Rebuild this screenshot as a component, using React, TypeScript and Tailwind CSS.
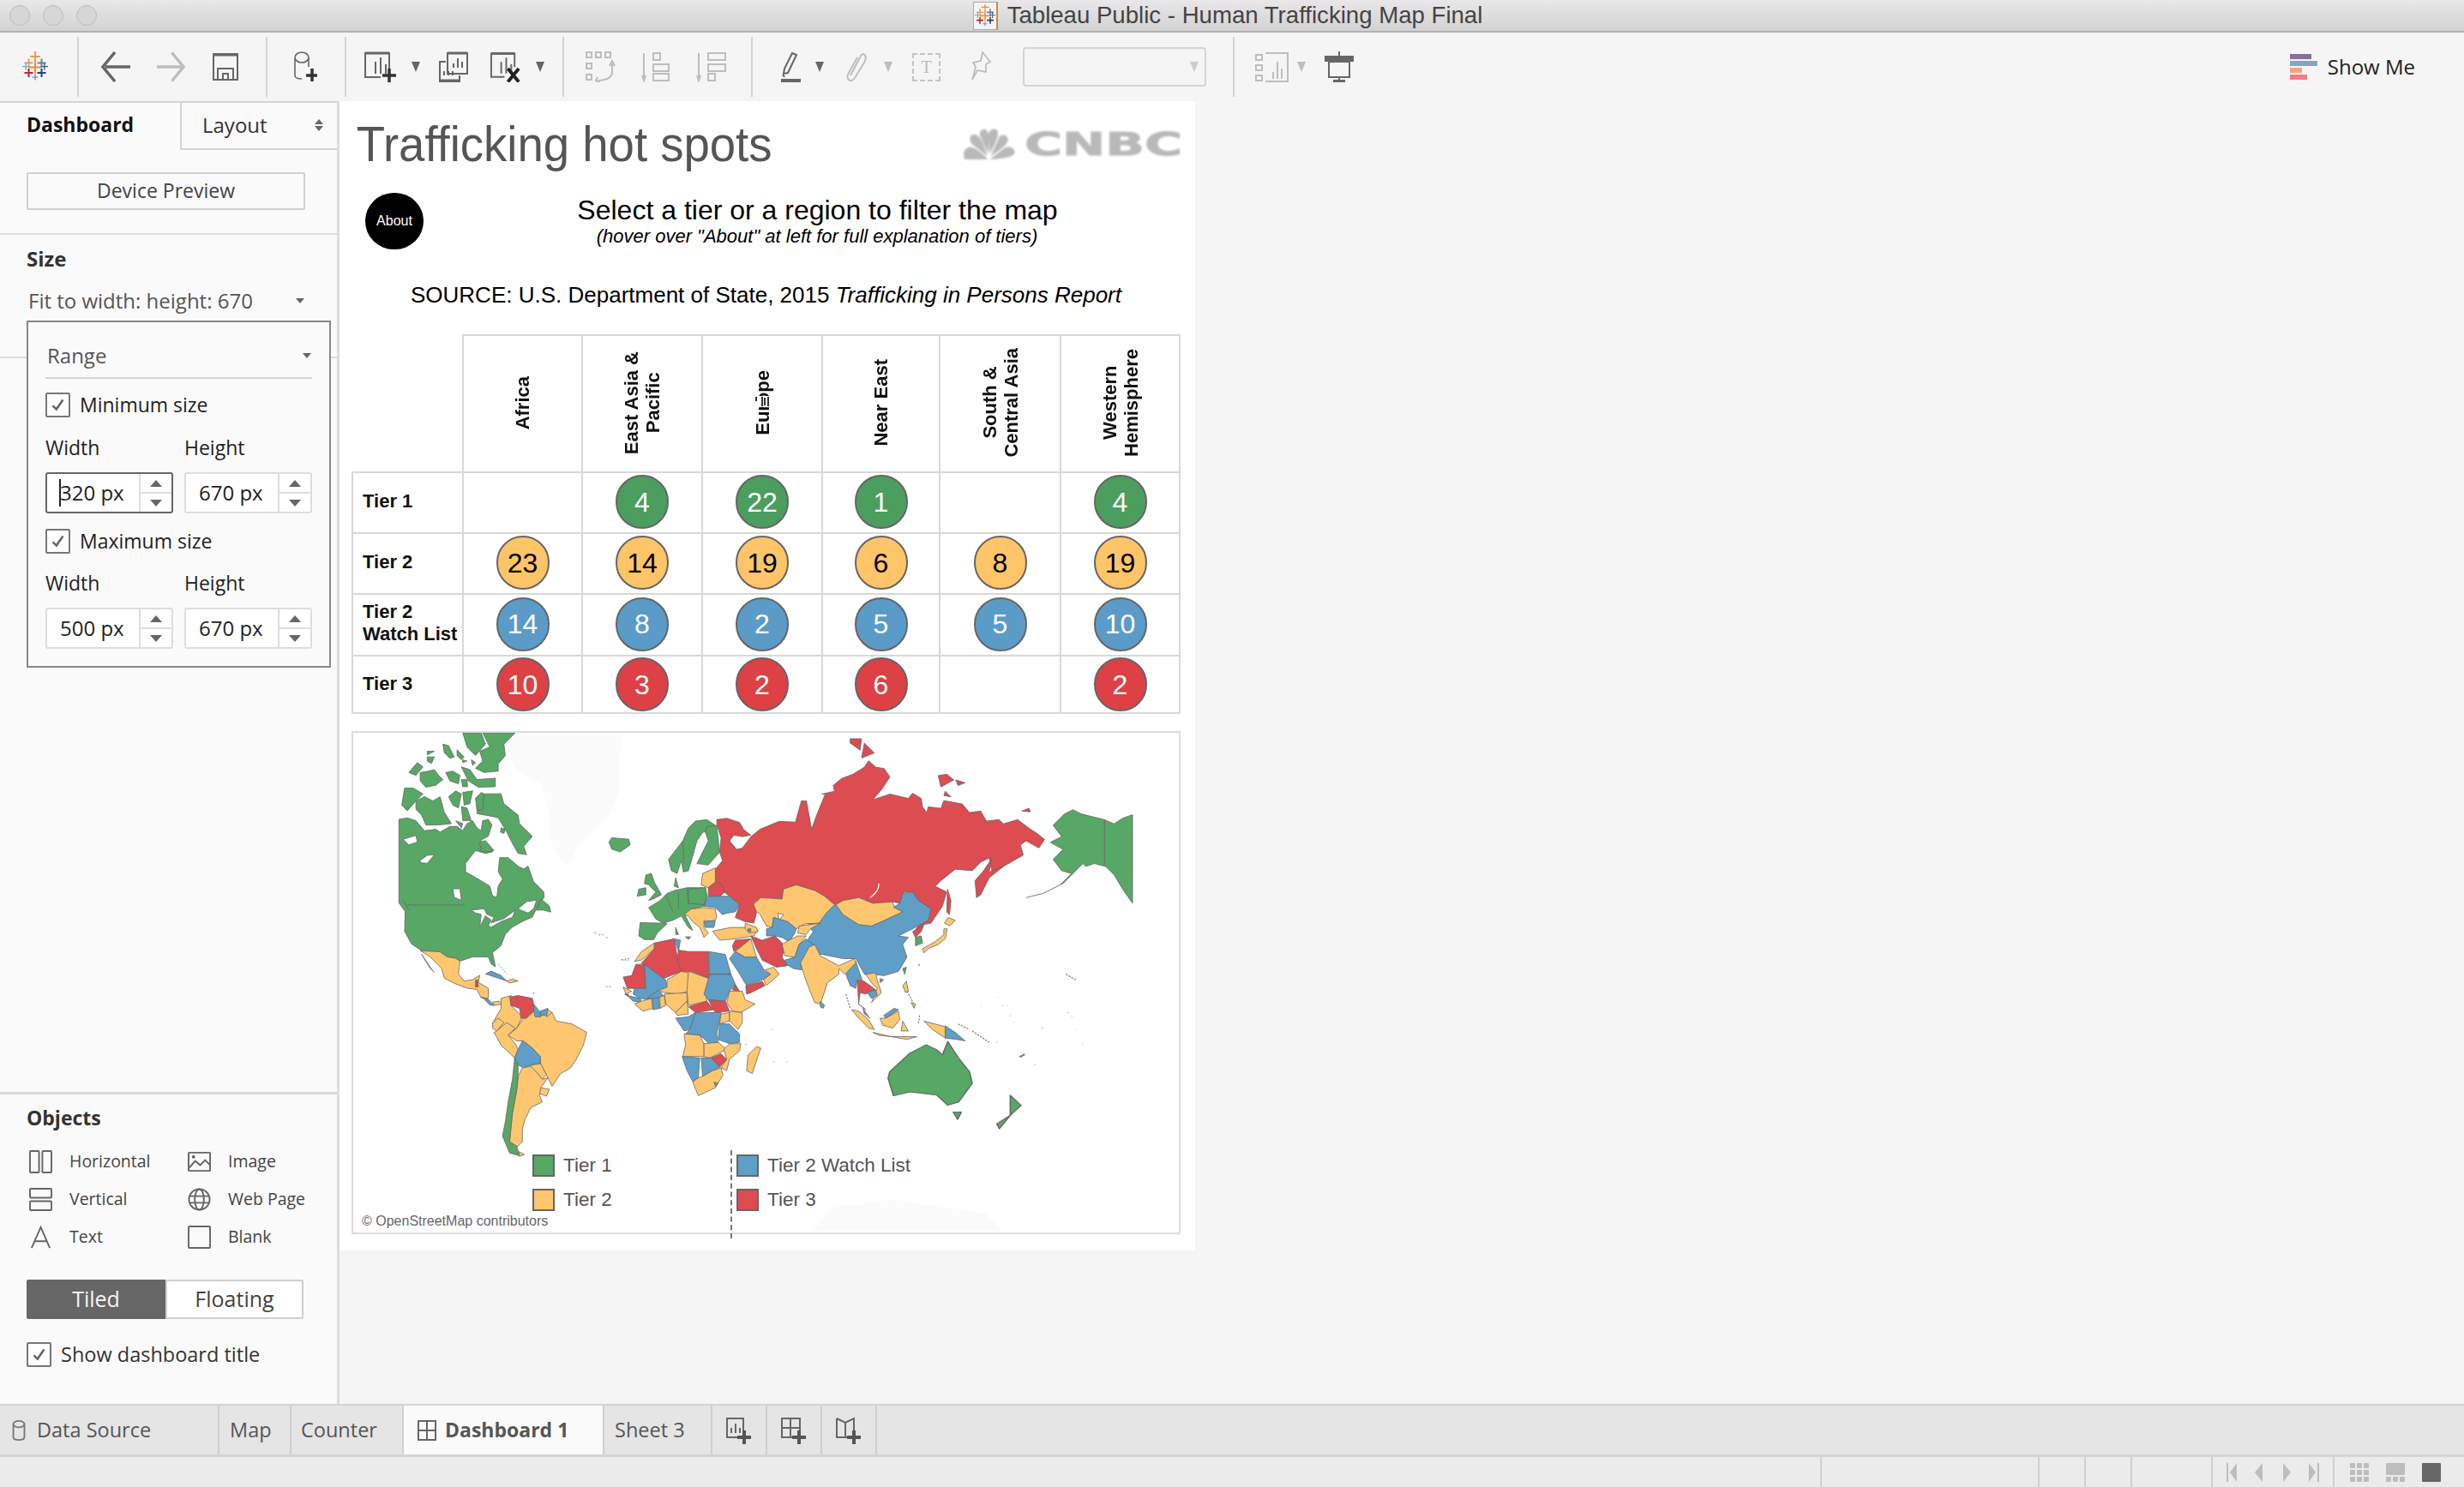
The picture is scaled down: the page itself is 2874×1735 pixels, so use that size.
import React from "react";

const GREEN = "#57a765";
const YELLOW = "#fec76f";
const BLUE = "#5f9ec7";
const RED = "#dc4c50";
const FAINT = "#fbfbfb";

type Shape = [string, string];

// zoomed map crops, so each group has its own offset in the svg
const northAmerica: Shape[] = [
  [FAINT, "465,0 860,0 845,100 850,200 810,290 700,400 670,465 640,450 600,370 600,290 570,180 480,130 460,80"],
  [GREEN, "70,305 100,300 130,310 160,345 200,340 215,350 250,330 275,330 295,345 310,320 330,310 345,335 360,345 365,310 385,305 398,325 385,365 365,375 355,385 365,415 390,410 400,420 375,425 340,415 305,460 305,490 340,510 390,540 400,575 415,580 420,540 435,515 420,490 425,440 455,440 490,470 510,480 525,470 545,525 580,560 582,580 560,610 540,650 505,665 470,685 445,710 430,750 400,775 410,825 395,815 385,790 330,790 285,805 270,795 240,790 215,772 150,768 115,745 90,700 92,630 70,600"],
  ["#ffffff", "325,625 370,620 380,640 405,650 395,670 440,655 480,625 470,650 430,665 395,685 385,680 395,660 375,645 355,685 360,640 340,635"],
  ["#ffffff", "490,620 520,595 555,590 545,620 525,635 500,625"],
  ["#ffffff", "85,375 130,362 135,385 105,395"],
  ["#ffffff", "145,450 170,432 195,430 170,460 145,458"],
  ["#ffffff", "260,550 285,550 290,590 265,580"],
  [GREEN, "555,625 570,585 600,610 605,632 580,625"],
  [GREEN, "350,260 370,215 430,215 440,250 490,290 495,320 540,365 510,400 520,430 490,425 470,390 450,350 420,300 400,295 345,285"],
  [GREEN, "340,230 360,210 370,215 365,270 345,275"],
  [GREEN, "130,240 160,225 190,240 215,225 230,280 255,320 210,325 165,325 150,290 130,270"],
  [GREEN, "90,195 120,195 155,215 130,240 100,275 80,255"],
  [GREEN, "245,225 270,205 290,215 280,265 260,255"],
  [GREEN, "295,210 330,205 320,250 300,255"],
  [GREEN, "290,260 310,265 325,310 295,310"],
  [GREEN, "270,310 295,320 290,335"],
  [GREEN, "355,385 375,380 405,415 385,420 360,420"],
  [GREEN, "430,335 445,340 440,355 428,350"],
  [GREEN, "295,0 360,0 375,40 340,80 310,50"],
  [GREEN, "365,0 480,0 440,40 445,80 420,110 420,135 370,140 340,125 365,100 355,65 390,50"],
  [GREEN, "290,120 320,130 345,165 410,160 410,190 350,192 315,170"],
  [GREEN, "105,140 135,105 155,120 130,150"],
  [GREEN, "145,140 175,135 195,130 210,150 225,165 200,185 165,192 145,170"],
  [GREEN, "235,140 260,135 285,150 280,180 250,170"],
  [GREEN, "290,165 310,165 312,190 295,190"],
  [GREEN, "225,40 245,45 265,85 250,90 230,70"],
  [GREEN, "275,60 300,85 290,95 275,80"],
  [GREEN, "170,65 195,65 170,78"],
  [GREEN, "170,85 195,85 185,108 170,100"],
  [GREEN, "295,95 310,100 295,105"],
  [GREEN, "325,95 340,105 330,115"],
  [GREEN, "810,385 820,370 880,375 885,395 850,420 820,410"],
  [YELLOW, "145,768 215,772 240,790 270,795 285,805 280,850 300,875 330,870 355,855 350,880 385,900 385,935 360,935 345,905 310,900 270,885 230,865 220,830 180,790 165,780"],
  [YELLOW, "150,780 190,840 195,845 180,830 155,790"],
  [BLUE, "375,850 395,840 430,855 450,875 420,865"],
  [YELLOW, "450,875 470,868 490,875 460,882"],
];

const southAmerica: Shape[] = [
  [RED, "40,40 48,40 50,65 40,65"],
  [BLUE, "62,100 85,108 105,130 90,128"],
  [YELLOW, "100,118 125,115 135,125 105,130"],
  [YELLOW, "130,105 165,95 165,130 205,170 185,210 155,230 100,195 110,175 130,140"],
  [YELLOW, "100,190 120,175 140,190 115,220 100,210"],
  [YELLOW, "115,220 150,190 180,210 155,235 180,265 190,285 178,315 130,270 105,225"],
  [YELLOW, "210,175 245,150 270,165 310,155 325,185 380,195 432,225 420,270 395,320 375,350 340,370 310,415 290,375 270,340 268,310 240,280 210,255 185,255 155,235 185,210"],
  [RED, "160,100 190,95 240,105 245,125 245,150 220,175 200,175 195,140 165,130"],
  [BLUE, "245,125 265,150 270,170 250,170 245,150"],
  [BLUE, "268,150 295,140 290,165 270,165"],
  [YELLOW, "295,145 310,155 290,170"],
  [BLUE, "205,255 240,280 268,310 268,335 235,340 210,350 190,340 178,315 190,285"],
  [YELLOW, "235,340 270,335 290,375 275,390 255,365 235,350"],
  [YELLOW, "270,420 300,425 290,450 265,440"],
  [YELLOW, "205,350 235,345 255,365 275,390 295,385 270,420 265,445 275,470 235,490 215,530 205,565 205,610 185,630 160,610 170,510 185,430 190,380"],
  [GREEN, "178,315 190,340 190,380 185,430 170,510 160,610 185,625 195,660 160,650 135,590 145,540 155,470 170,390"],
  [YELLOW, "192,645 212,655 195,662"],
];

const eurafrica: Shape[] = [
  [FAINT, "20,510 60,490 60,540 20,540"],
  [GREEN, "180,125 230,60 250,15 275,-10 315,-15 345,5 350,20 300,30 280,60 265,115 250,165 232,170 225,130 210,175 190,165"],
  [GREEN, "315,10 350,5 360,100 320,145 280,140 300,100 320,60 310,30"],
  [GREEN, "205,190 215,225 200,220"],
  [GREEN, "100,180 120,175 130,205 155,250 125,265 110,270 135,240 110,215 95,210"],
  [GREEN, "75,230 100,225 100,250 70,255"],
  [GREEN, "110,295 150,270 175,245 200,235 245,225 310,225 315,255 305,290 260,300 240,325 265,375 250,365 225,325 195,340 160,350 135,335"],
  [GREEN, "250,230 310,225 315,255 305,285 250,280"],
  [GREEN, "80,348 160,350 175,352 140,385 128,408 95,408 75,395"],
  [GREEN, "205,365 215,390 205,390"],
  [GREEN, "240,398 258,398 250,408"],
  [YELLOW, "235,320 260,300 305,295 345,300 350,330 340,345 305,340 305,365 320,385 305,400 290,365 265,345 250,325"],
  [BLUE, "305,345 345,340 340,365 310,365"],
  [YELLOW, "300,175 345,155 345,205 320,225 295,215"],
  [RED, "320,225 345,205 365,210 378,240 360,258 320,255"],
  [BLUE, "305,290 320,255 395,255 430,285 415,310 385,315 370,320 345,295"],
  [YELLOW, "335,378 400,365 470,365 495,375 480,395 420,405 360,410"],
  [RED, "405,430 415,410 470,405 440,430 410,450"],
  [YELLOW, "440,430 470,405 490,470 450,470 415,450"],
  [RED, "470,395 510,410 555,395 590,430 580,470 600,500 560,505 510,480 490,440"],
  [BLUE, "395,475 415,450 450,470 490,470 520,520 540,530 510,550 455,570 425,520"],
  [YELLOW, "520,515 550,505 570,530 525,570 515,550 540,530"],
  [RED, "452,572 510,555 520,570 470,595 455,600"],
  [YELLOW, "450,350 490,365 495,380 465,385 450,370"],
  [GREEN, "460,370 470,370 470,380 460,380"],
  [YELLOW, "480,285 505,260 580,265 585,230 630,215 695,235 730,255 765,285 735,315 710,350 660,352 630,370 600,345 550,330 545,365 525,360 500,315 490,310"],
  ["#ffffff", "565,315 585,320 570,340"],
  [BLUE, "525,370 545,365 550,330 600,345 630,370 625,385 605,415 580,400 555,395 525,395"],
  [YELLOW, "640,360 715,350 680,370 665,390 635,385"],
  [YELLOW, "580,425 605,410 635,395 665,395 640,425 625,470 590,465"],
  [BLUE, "590,480 625,470 640,425 665,405 690,425 670,465 645,490 650,515 620,510 595,495"],
  [YELLOW, "645,490 675,435 695,425 715,465 780,500 835,475 840,490 800,530 780,510 780,530 740,560 715,635 695,630 675,580 660,540"],
  [BLUE, "715,625 730,640 725,650 715,645"],
  [YELLOW, "60,485 85,450 130,420 130,440 85,480"],
  [RED, "130,420 200,405 210,465 225,520 150,550 85,490 130,440"],
  [BLUE, "200,405 222,410 215,450"],
  [RED, "215,445 250,450 320,450 323,545 260,520 225,520 210,480"],
  [BLUE, "322,450 380,460 400,530 325,530"],
  [RED, "20,540 50,535 65,495 95,495 103,580 35,580"],
  [BLUE, "95,495 170,550 175,575 145,585 110,620 80,615 55,600 60,580 100,580"],
  [YELLOW, "175,550 225,520 250,525 250,590 215,600 170,595 145,590 175,575"],
  [YELLOW, "250,520 323,545 310,590 315,625 250,640 245,590"],
  [BLUE, "325,530 400,530 415,565 395,590 380,625 320,620 305,600"],
  [RED, "405,585 415,565 430,590"],
  [YELLOW, "395,590 440,590 450,620 485,635 435,665 405,660 385,630"],
  [RED, "320,620 380,625 395,660 345,665"],
  [RED, "250,645 315,625 340,655 275,665"],
  [YELLOW, "165,600 245,595 245,625 205,665 170,635"],
  [YELLOW, "205,665 245,625 250,670 210,675"],
  [BLUE, "205,685 250,680 275,665 280,690 255,725 235,730"],
  [BLUE, "275,665 345,665 365,665 350,740 355,775 330,780 290,745 240,740 255,725"],
  [YELLOW, "365,670 395,665 395,695 360,705"],
  [YELLOW, "395,660 440,665 440,700 425,725 395,695"],
  [BLUE, "360,705 395,705 430,740 430,770 395,775 355,760"],
  [YELLOW, "235,740 290,745 305,775 305,820 230,820 240,780"],
  [YELLOW, "305,775 355,770 385,795 355,810 325,825 305,820"],
  [YELLOW, "395,775 435,775 430,800 395,830 385,870 365,860 385,830 375,795"],
  [RED, "330,825 365,810 385,830 360,858"],
  [BLUE, "228,820 290,825 285,895 265,908 245,870"],
  [BLUE, "295,825 330,825 360,858 335,870 300,890"],
  [YELLOW, "300,890 335,870 365,860 372,885 345,930 285,958 265,910 285,895"],
  [BLUE, "340,910 355,915 345,925"],
  [YELLOW, "20,575 50,590 30,600"],
  [BLUE, "35,605 80,615 85,630 55,625"],
  [RED, "25,600 38,600 38,608"],
  [YELLOW, "85,625 120,615 125,650 90,660 60,635"],
  [BLUE, "122,615 145,610 150,650 125,655"],
  [BLUE, "105,615 145,585 165,610 120,615"],
  [YELLOW, "150,610 165,605 170,640 150,650"],
  [YELLOW, "490,785 505,790 475,880 455,870 460,815"],
];

const asia: Shape[] = [
  [RED, "0,195 45,185 40,165 70,140 110,125 150,100 165,78 190,100 220,105 240,135 210,180 180,215 240,195 305,210 320,192 350,210 355,240 370,260 375,240 420,245 430,218 495,230 520,260 560,255 580,290 625,285 640,300 690,285 730,315 760,335 785,355 765,385 720,360 700,375 710,410 640,450 600,470 590,420 560,435 530,465 470,460 420,500 400,520 440,540 425,590 385,650 360,655 325,680 385,600 340,570 320,540 290,540 275,580 250,575 180,580 130,560 75,570 50,585 0,565 -25,535 -90,515 -135,530 -140,565 -215,560 -240,580 -230,610 -235,635 -240,650 -270,645 -305,630 -290,585 -325,555 -345,540 -355,510 -375,505 -375,460 -350,430 -360,400 -355,350 -370,300 -370,285 -335,280 -290,295 -275,320 -250,340 -280,345 -310,340 -325,360 -300,390 -280,385 -250,345 -216,318 -150,291 -93,294 -72,219 -54,219 -36,318 -15,261 12,195"],
  [BLUE, "285,545 320,540 340,570 385,600 375,640 330,665 300,680 270,695 305,700 285,725 300,770 270,820 220,835 175,830 150,830 120,775 75,775 0,760 -30,760 -55,735 -45,700 -30,680 -50,660 -30,620 50,585 75,620 130,655 175,660 220,640 285,610 250,595 275,580"],
  [YELLOW, "50,585 75,570 130,560 180,580 250,575 255,595 285,610 220,640 175,660 130,655 75,620"],
  [RED, "320,680 360,655 350,680 330,700"],
  [GREEN, "330,700 350,695 355,720 330,730"],
  [YELLOW, "355,740 400,715 430,690 430,670 442,670 435,705 410,725 375,740 360,755"],
  [YELLOW, "432,650 445,630 470,640 450,660"],
  [RED, "443,530 455,570 450,620 440,610"],
  [RED, "600,420 590,470 640,450 590,490 560,550 545,560 540,500 570,465"],
  [RED, "100,0 140,0 135,40 100,15"],
  [RED, "150,15 185,50 140,68"],
  [RED, "410,130 440,125 465,145 420,170"],
  [RED, "472,145 505,155 480,165"],
  [RED, "435,185 455,205 430,200"],
  [RED, "705,255 730,245 735,258"],
  [GREEN, "815,305 855,265 885,250 915,265 995,285 1030,300 1060,280 1095,268 1095,580 1060,530 1030,480 1000,450 960,440 930,450 920,440 880,480 850,510 840,515 880,475 845,465 815,425 850,390 805,365 845,345"],
  [GREEN, "285,810 298,805 292,830"],
  [YELLOW, "285,870 298,855 305,890 295,895"],
  [YELLOW, "315,930 330,935 325,950"],
  [BLUE, "85,830 120,785 135,830 150,870 125,850 120,880 100,870"],
  [YELLOW, "155,830 190,825 195,850 210,895 175,930 195,880 175,860"],
  [RED, "125,850 150,855 190,885 170,890 155,900 135,895 130,935 155,955 130,935"],
  [BLUE, "160,895 190,885 195,905 175,915"],
  [BLUE, "145,950 165,980 170,985 150,970"],
  [BLUE, "205,845 218,850 205,860"],
  [YELLOW, "105,955 130,960 165,990 185,1025 165,1020 130,985"],
  [YELLOW, "180,1035 245,1050 200,1045"],
  [YELLOW, "205,985 225,985 270,960 275,990 250,1020 215,1010"],
  [BLUE, "218,975 255,950 270,955 225,985"],
  [YELLOW, "285,995 305,1030 280,1030"],
  [YELLOW, "360,995 435,1015 435,1055 390,1025"],
  [BLUE, "435,1012 470,1035 505,1065 475,1060 435,1055"],
  [YELLOW, "245,1050 335,1050 300,1060"],
];

const oceania: Shape[] = [
  [FAINT, "860,1515 900,1440 1010,1420 1180,1460 1210,1515"],
  [GREEN, "1003,1040 1040,985 1070,960 1090,975 1100,990 1110,950 1130,1000 1150,1040 1155,1075 1130,1130 1110,1140 1090,1110 1040,1100 1010,1112 1000,1060"],
  [GREEN, "1120,1160 1135,1160 1128,1182"],
  [GREEN, "1225,1110 1245,1140 1225,1170"],
  [GREEN, "1225,1170 1205,1210 1200,1195"],
];

function Shapes({ items }: { items: Shape[] }) {
  return (
    <>
      {items.map(([fill, points], i) => (
        <polygon key={i} points={points} fill={fill} stroke={fill === FAINT ? "none" : "#666"} strokeWidth="2.4" strokeLinejoin="round" />
      ))}
    </>
  );
}

function WorldMap() {
  return (
    <svg viewBox="411 853 967 587" className="w-full h-full block">
      <g transform="translate(400 840) scale(0.6378 0.3953)">
        <Shapes items={oceania} />
      </g>
      <g transform="translate(440 853) scale(0.3333)">
        <Shapes items={northAmerica} />
        <path d="M100 607H300M85 590L105 625" stroke="#666" strokeWidth="2.4" fill="none" />
        {/* tiny islands */}
        <path d="M420 815L450 850M760 705H765M775 712H790M800 722H805M855 800L885 795M800 895H820M545 915V920" stroke="#777" strokeWidth="3" strokeDasharray="5 6" fill="none" />
      </g>
      <g transform="translate(540 1130) scale(0.3333)">
        <Shapes items={southAmerica} />
      </g>
      <g transform="translate(960 860) scale(0.3333)">
        <Shapes items={asia} />
        <path d="M996 285V445M720 560L780 545L840 515" stroke="#666" strokeWidth="2.6" fill="none" />
        <path d="M200 510Q205 535 170 560" stroke="#fff" strokeWidth="4" fill="none" />
        <path d="M860 830L895 850M300 890L322 930M530 1030L590 1070M480 1005L520 1025M345 975L340 1005M85 900L100 950M345 795L340 800" stroke="#777" strokeWidth="3.4" strokeDasharray="7 4" fill="none" />
        <path d="M620 912h2M635 940h3M655 942h2M665 975v3M675 998h2M560 942h2M775 1018h4M895 1025h2M865 965h3M880 980h2M918 1075h2M750 1148h3M615 1070h3" stroke="#888" strokeWidth="3" fill="none" />
        <path d="M697 1122L715 1112" stroke="#777" strokeWidth="6" fill="none" />
      </g>
      <g transform="translate(720 960) scale(0.3333)">
        <Shapes items={eurafrica} />
        <path d="M230 60L235 140M215 240V300M170 250L195 310M245 225L250 280M325 530H400" stroke="#666" strokeWidth="2" fill="none" />
        <path d="M15 480H45M450 778h6M545 725h3M550 838h3M595 838h3" stroke="#888" strokeWidth="3" strokeDasharray="5 5" fill="none" />
      </g>
    </svg>
  );
}

const ink = "#666";
const pale = "#bdbdbd";

function Caret({ color = ink, className = "" }: { color?: string; className?: string }) {
  return (
    <svg viewBox="0 0 12 14" className={`w-[12px] h-[14px] shrink-0 ${className}`}>
      <path d="M1 1H11L6 13Z" fill={color} />
    </svg>
  );
}

function Bars({ c }: { c: string }) {
  return <path d="M14 12V26M20 7V26M26 15V26" stroke={c} strokeWidth="2" fill="none" />;
}

function TableauLogo({ className = "" }: { className?: string }) {
  const plus = [
    [18, 4, 7, "#f28e2b", 2],
    [18, 19, 9, "#f28e2b", 2.4],
    [9, 13, 6, "#e8925a", 2],
    [27, 13, 6, "#59879b", 2.4],
    [5, 18, 5, "#7ba7b7", 1.6],
    [31, 18, 5, "#3d5a8a", 1.6],
    [9, 27, 6, "#c72037", 2.4],
    [27, 27, 6, "#1f447e", 2.4],
    [18, 33, 4, "#7b8fb5", 1.6],
  ] as const;
  return (
    <svg viewBox="0 0 36 37" className={className}>
      {plus.map(([x, y, r, c, w], i) => (
        <path key={i} d={`M${x - r} ${y}H${x + r}M${x} ${y - r}V${y + r}`} stroke={c} strokeWidth={w} />
      ))}
    </svg>
  );
}

function Toolbar() {
  const Sep = ({ ml }: { ml: string }) => <div className={`w-[2px] h-[70px] bg-[#d4d4d4] shrink-0 ${ml}`} />;
  return (
    <div className="h-[80px] bg-[#f5f5f5] flex items-center shrink-0">
      <TableauLogo className="ml-[26px] w-[30px] h-[36px] mr-[3px] shrink-0" />
      <Sep ml="ml-[31px]" />
      <svg viewBox="0 0 36 36" className="ml-[25px] w-[36px] h-[36px] shrink-0">
        <path d="M35 18H6M17 1L3 18L17 35" stroke={ink} strokeWidth="3.5" fill="none" />
      </svg>
      <svg viewBox="0 0 36 36" className="ml-[29px] w-[35px] h-[36px] shrink-0">
        <path d="M1 18H30M19 1L33 18L19 35" stroke={pale} strokeWidth="3.5" fill="none" />
      </svg>
      <svg viewBox="0 0 30 32" className="ml-[31px] w-[30px] h-[32px] shrink-0">
        <rect x="1" y="1" width="28" height="30" fill="none" stroke={ink} strokeWidth="2" />
        <path d="M1 2H29" stroke={ink} strokeWidth="3" />
        <path d="M6 31V18H24V31M12 31V24H18V31" fill="none" stroke={ink} strokeWidth="2" />
      </svg>
      <Sep ml="ml-[32px]" />
      <svg viewBox="0 0 28 36" className="ml-[30px] w-[28px] h-[36px] shrink-0">
        <path d="M2 8V28Q2 32 10 32M18 8V18" fill="none" stroke={ink} strokeWidth="1.6" />
        <ellipse cx="10" cy="7" rx="8" ry="6" fill="none" stroke={ink} strokeWidth="1.6" />
        <path d="M22 20V35M15 28H28" stroke="#333" strokeWidth="3.5" />
      </svg>
      <Sep ml="ml-[32px]" />
      <svg viewBox="0 0 38 36" className="ml-[20px] w-[38px] h-[36px] shrink-0">
        <path d="M30 20V2H2V30H20" fill="none" stroke={ink} strokeWidth="2" />
        <path d="M2 2H30" stroke={ink} strokeWidth="3" />
        <Bars c={ink} />
        <path d="M30 20V36M22 28H38" stroke="#333" strokeWidth="3.5" />
      </svg>
      <Caret className="ml-[17px]" />
      <svg viewBox="0 0 35 36" className="ml-[21px] w-[35px] h-[36px] shrink-0">
        <path d="M10 2H33V26H10Z" fill="none" stroke={ink} strokeWidth="2" />
        <path d="M10 2H33" stroke={ink} strokeWidth="3" />
        <path d="M17 19V14M22 19V8M27 19V12" stroke={ink} strokeWidth="2" />
        <path d="M8 12H1V35H24V28" fill="none" stroke={ink} strokeWidth="2" />
        <path d="M1 34H24" stroke={ink} strokeWidth="3" />
        <path d="M6 28V23M11 28V23M16 28V23" stroke={ink} strokeWidth="2" />
      </svg>
      <svg viewBox="0 0 38 36" className="ml-[24px] w-[37px] h-[36px] shrink-0">
        <path d="M30 18V2H2V30H18" fill="none" stroke={ink} strokeWidth="2" />
        <path d="M2 2H30" stroke={ink} strokeWidth="3" />
        <Bars c={ink} />
        <path d="M22 20L35 36M35 20L22 36" stroke="#222" strokeWidth="4" />
      </svg>
      <Caret className="ml-[16px]" />
      <Sep ml="ml-[20px]" />
      <svg viewBox="0 0 35 36" className="ml-[25px] w-[35px] h-[36px] shrink-0" fill="none" stroke={pale} strokeWidth="2">
        <rect x="1" y="1" width="6" height="6" />
        <rect x="12" y="1" width="6" height="6" />
        <rect x="23" y="1" width="6" height="6" />
        <rect x="1" y="14" width="6" height="6" />
        <rect x="1" y="27" width="6" height="6" />
        <path d="M31 14V24Q31 33 15 34M28 17L31 11L34 17M14 30L12 34L17 36" />
      </svg>
      <svg viewBox="0 0 34 36" className="ml-[30px] w-[34px] h-[36px] shrink-0" fill="none" stroke={pale} strokeWidth="2">
        <path d="M3 2V32M1 28L3 34L5 28" />
        <rect x="14" y="2" width="8" height="8" />
        <rect x="14" y="15" width="18" height="8" />
        <rect x="14" y="26" width="18" height="8" />
      </svg>
      <svg viewBox="0 0 35 36" className="ml-[30px] w-[35px] h-[36px] shrink-0" fill="none" stroke={pale} strokeWidth="2">
        <path d="M3 2V32M1 28L3 34L5 28" />
        <rect x="14" y="2" width="20" height="8" />
        <rect x="14" y="15" width="20" height="8" />
        <rect x="14" y="26" width="8" height="8" />
      </svg>
      <Sep ml="ml-[29px]" />
      <svg viewBox="0 0 23 36" className="ml-[33px] w-[23px] h-[36px] shrink-0">
        <path d="M13 2L18 4L8 25L3 26L4 20Z" fill="none" stroke={ink} strokeWidth="2" />
        <path d="M2 27L4 30" stroke={ink} strokeWidth="2" />
        <rect x="0" y="32" width="23" height="4" fill={ink} />
      </svg>
      <Caret className="ml-[16px]" />
      <svg viewBox="0 0 28 36" className="ml-[22px] w-[28px] h-[36px] shrink-0">
        <path d="M8 28L20 5Q23 1 25 5Q27 8 24 13L13 31Q9 36 6 33Q3 30 6 25L16 7" fill="none" stroke={pale} strokeWidth="2" />
      </svg>
      <Caret color={pale} className="ml-[18px]" />
      <div className="ml-[22px] w-[33px] h-[33px] border-2 border-dashed border-[#c4c4c4] shrink-0 flex items-center justify-center text-[20px] text-[#bbb] font-['Liberation_Serif',serif]">
        T
      </div>
      <svg viewBox="0 0 25 36" className="ml-[35px] w-[25px] h-[36px] shrink-0">
        <path d="M14 1L23 12L18 15L18 24L8 22L2 33L6 18L3 13L12 11Z" fill="none" stroke={pale} strokeWidth="1.8" />
      </svg>
      <div className="ml-[36px] w-[214px] h-[46px] shrink-0 border-2 border-[#d4d4d4] rounded-sm flex items-center justify-end pr-[6px]">
        <Caret color="#ccc" />
      </div>
      <Sep ml="ml-[31px]" />
      <svg viewBox="0 0 40 36" className="ml-[24px] w-[40px] h-[36px] shrink-0" fill="none" stroke={pale} strokeWidth="2">
        <rect x="1" y="4" width="7" height="6" />
        <rect x="1" y="16" width="7" height="6" />
        <rect x="1" y="28" width="7" height="6" />
        <path d="M12 2H38V35H12" />
        <path d="M21 32V24M26 32V12M31 32V20" />
      </svg>
      <Caret color={pale} className="ml-[8px]" />
      <svg viewBox="0 0 34 36" className="ml-[21px] w-[34px] h-[36px] shrink-0">
        <rect x="0" y="5" width="34" height="7" fill={ink} />
        <rect x="5" y="12" width="24" height="18" fill="none" stroke={ink} strokeWidth="2" />
        <path d="M17 0V5M17 30V34" stroke={ink} strokeWidth="2" />
        <rect x="10" y="33" width="14" height="3" fill={ink} />
      </svg>
      <div className="ml-auto mr-[57px] flex items-center gap-[12px]">
        <div className="flex flex-col gap-[2px]">
          <div className="h-[6px] w-[25px] bg-[#85719a]" />
          <div className="h-[6px] w-[32px] bg-[#82a6cb]" />
          <div className="h-[6px] w-[14px] bg-[#f0a878]" />
          <div className="h-[6px] w-[20px] bg-[#f57a88]" />
        </div>
        <span className="text-[24px] text-[#222]">Show Me</span>
      </div>
    </div>
  );
}

function Check() {
  return (
    <div className="w-[29px] h-[29px] border-2 border-[#777] rounded-[2px] flex items-center justify-center bg-white shrink-0">
      <svg viewBox="0 0 20 18" className="w-[17px] h-[17px]">
        <path d="M3 10L8 15L17 2" fill="none" stroke="#666" strokeWidth="3" />
      </svg>
    </div>
  );
}

function Stepper() {
  return (
    <div className="w-[38px] h-full border-l-2 border-[#ddd] flex flex-col shrink-0">
      <div className="flex-1 flex items-center justify-center border-b-2 border-[#ddd]">
        <svg viewBox="0 0 14 8" className="w-[14px] h-[8px]"><path d="M0 8L7 0L14 8Z" fill="#666" /></svg>
      </div>
      <div className="flex-1 flex items-center justify-center">
        <svg viewBox="0 0 14 8" className="w-[14px] h-[8px]"><path d="M0 0H14L7 8Z" fill="#666" /></svg>
      </div>
    </div>
  );
}

function SizeInput({ value, focus = false }: { value: string; focus?: boolean }) {
  return (
    <div className={`w-[149px] h-[48px] flex items-center bg-white rounded-[3px] border-2 ${focus ? "border-[#666]" : "border-[#ddd]"}`}>
      <div className="flex-1 pl-[15px] text-[24px] text-[#222] relative leading-none">
        {focus && <span className="absolute left-[14px] -top-[4px] w-[2px] h-[32px] bg-[#222]" />}
        {value}
      </div>
      <Stepper />
    </div>
  );
}

function SizePopup() {
  return (
    <div className="absolute left-[31px] top-[100px] w-[355px] h-[405px] bg-[#fafafa] border-2 border-[#888] px-[20px] pt-[14px] text-[#222] text-[23px]">
      <div className="h-[52px] border-b-2 border-[#d4d4d4] flex items-center justify-between text-[#555] text-[24px]">
        <span className="pl-[2px]">Range</span>
        <Caret className="scale-y-50" />
      </div>
      <div className="flex items-center gap-[11px] mt-[16px] h-[29px]">
        <Check />
        <span>Minimum size</span>
      </div>
      <div className="flex mt-[16px] h-[38px] items-center">
        <span className="w-[162px]">Width</span>
        <span>Height</span>
      </div>
      <div className="flex gap-[13px] mt-[10px]">
        <SizeInput value="320 px" focus />
        <SizeInput value="670 px" />
      </div>
      <div className="flex items-center gap-[11px] mt-[18px] h-[29px]">
        <Check />
        <span>Maximum size</span>
      </div>
      <div className="flex mt-[15px] h-[38px] items-center">
        <span className="w-[162px]">Width</span>
        <span>Height</span>
      </div>
      <div className="flex gap-[13px] mt-[10px]">
        <SizeInput value="500 px" />
        <SizeInput value="670 px" />
      </div>
    </div>
  );
}

function ObjectIcon({ kind }: { kind: string }) {
  const s = { fill: "none", stroke: "#666", strokeWidth: 2 };
  return (
    <svg viewBox="0 0 28 28" className="w-[27px] h-[27px] shrink-0">
      {kind === "h" && (
        <g {...s}>
          <rect x="1" y="1" width="11" height="26" rx="1" />
          <rect x="16" y="1" width="11" height="26" rx="1" />
        </g>
      )}
      {kind === "v" && (
        <g {...s}>
          <rect x="1" y="1" width="26" height="11" rx="1" />
          <rect x="1" y="16" width="26" height="11" rx="1" />
        </g>
      )}
      {kind === "t" && <path d="M3 27L14 2L25 27M7 19H21" {...s} />}
      {kind === "i" && (
        <g {...s}>
          <rect x="1" y="3" width="26" height="22" rx="1" />
          <path d="M2 21L9 13L15 18L21 12L27 18" />
          <circle cx="7" cy="8" r="1" />
        </g>
      )}
      {kind === "w" && (
        <g {...s}>
          <circle cx="14" cy="14" r="12.5" />
          <ellipse cx="14" cy="14" rx="5.5" ry="12.5" />
          <path d="M2 10H26M2 18H26" />
        </g>
      )}
      {kind === "b" && <rect x="1" y="1" width="26" height="26" rx="1" {...s} />}
    </svg>
  );
}

function Sidebar() {
  const objects = [
    ["h", "Horizontal"],
    ["i", "Image"],
    ["v", "Vertical"],
    ["w", "Web Page"],
    ["t", "Text"],
    ["b", "Blank"],
  ];
  return (
    <aside className="w-[396px] shrink-0 bg-[#fafafa] border-r-[3px] border-[#dcdcdc] flex flex-col">
      <div className="h-[57px] border-t-2 border-[#d4d4d4] flex shrink-0">
        <div className="w-[210px] pl-[31px] pb-[4px] flex items-center font-bold text-[23px] text-[#111]">Dashboard</div>
        <div className="flex-1 border-l-2 border-b-2 border-[#d4d4d4] flex items-center pl-[24px] pr-[16px] pb-[2px] justify-between text-[24px] text-[#333]">
          <span>Layout</span>
          <svg viewBox="0 0 10 14" className="w-[10px] h-[14px]"><path d="M0 6L5 0L10 6ZM0 8H10L5 14Z" fill="#666" /></svg>
        </div>
      </div>
      <div className="mx-[31px] mt-[26px] w-[325px] h-[44px] shrink-0 border-2 border-[#d0d0d0] rounded-[2px] flex items-center justify-center text-[23px] text-[#444] pb-[2px]">
        Device Preview
      </div>
      <div className="relative mt-[27px] h-[146px] shrink-0 border-t-2 border-b-2 border-[#dcdcdc] pl-[31px] z-10">
        <div className="font-bold text-[24px] text-[#333] leading-none mt-[16px]">Size</div>
        <div className="flex justify-between items-center pr-[37px] mt-[25px] text-[24px] text-[#555] leading-none">
          <span className="pl-[2px]">Fit to width: height: 670</span>
          <Caret color="#666" className="scale-y-50" />
        </div>
        <SizePopup />
      </div>
      <div className="flex-1" />
      <div className="border-t-[3px] border-[#d8d8d8] h-[364px] shrink-0 pl-[31px] pt-[12px]">
        <div className="font-bold text-[23px] text-[#333] h-[30px] leading-[30px]">Objects</div>
        <div className="grid grid-cols-[185px_1fr] auto-rows-[44px] mt-[14px] pl-[3px] text-[19.5px] text-[#444]">
          {objects.map(([kind, label]) => (
            <div key={label} className="flex items-center gap-[20px]">
              <ObjectIcon kind={kind} />
              <span>{label}</span>
            </div>
          ))}
        </div>
        <div className="flex mt-[28px] w-[323px] h-[46px] text-[25px]">
          <div className="w-[162px] bg-[#666] text-[#f5f5f5] flex items-center justify-center rounded-l-[2px]">Tiled</div>
          <div className="flex-1 bg-white border-2 border-[#d0d0d0] text-[#444] flex items-center justify-center rounded-r-[2px]">Floating</div>
        </div>
        <div className="flex items-center gap-[11px] mt-[24px] text-[23.5px] text-[#333]">
          <Check />
          <span>Show dashboard title</span>
        </div>
      </div>
    </aside>
  );
}

const regions = [
  ["Africa"],
  ["East Asia &", "Pacific"],
  ["Europe"],
  ["Near East"],
  ["South &", "Central Asia"],
  ["Western", "Hemisphere"],
];

const rows: { label: string[]; color: string; text: string; values: (number | null)[] }[] = [
  { label: ["Tier 1"], color: "bg-[#4b9e5e]", text: "text-white", values: [null, 4, 22, 1, null, 4] },
  { label: ["Tier 2"], color: "bg-[#fec568]", text: "text-black", values: [23, 14, 19, 6, 8, 19] },
  { label: ["Tier 2", "Watch List"], color: "bg-[#5b9bc7]", text: "text-white", values: [14, 8, 2, 5, 5, 10] },
  { label: ["Tier 3"], color: "bg-[#dd4145]", text: "text-white", values: [10, 3, 2, 6, null, 2] },
];

function TierTable() {
  return (
    <div className="grid grid-cols-[129px_139px_140px_140px_137px_141px_141px] grid-rows-[160px_71px_71px_72px_69px] w-[967px] font-['Liberation_Sans',sans-serif]">
      <div />
      {regions.map((lines, i) => (
        <div key={lines[0]} className={`relative border-l-2 border-t-2 border-[#d8d8d8] flex items-center justify-center pb-[2px] ${i === 5 ? "border-r-2" : ""}`}>
          <div className="[writing-mode:vertical-rl] rotate-180 font-bold text-[22px] leading-[25px] text-center text-[#111]">
            {lines.map((l) => (
              <div key={l}>{l}</div>
            ))}
          </div>
          {lines[0] === "Europe" && (
            <svg viewBox="0 0 22 13" className="absolute left-[58px] top-[70px] w-[22px] h-[13px]">
              <rect x="0" y="0" width="22" height="13" fill="#fff" />
              <path d="M4 1V6M11 1V12M18 1V12M14 2V11" stroke="#333" strokeWidth="2" />
            </svg>
          )}
        </div>
      ))}
      {rows.map((row) => (
        <React.Fragment key={row.label.join(" ")}>
          <div className="border-l-2 border-t-2 border-[#d8d8d8] flex flex-col justify-center pl-[11px] pb-[4px] font-bold text-[22px] leading-[26px] text-[#111]">
            {row.label.map((l) => (
              <div key={l}>{l}</div>
            ))}
          </div>
          {row.values.map((v, i) => (
            <div key={i} className={`border-l-2 border-t-2 border-[#d8d8d8] flex items-center justify-center pb-[2px] ${i === 5 ? "border-r-2" : ""}`}>
              {v !== null && (
                <div className={`w-[62px] h-[63px] rounded-full border-2 border-[#666] flex items-center justify-center text-[32px] ${row.color} ${row.text}`}>
                  {v}
                </div>
              )}
            </div>
          ))}
        </React.Fragment>
      ))}
      <div className="col-span-7 h-[2px] bg-[#d8d8d8] -mt-[2px]" />
    </div>
  );
}

function Cnbc() {
  return (
    <div className="flex items-center gap-[11px] blur-[1px] text-[#b9b9b9]">
      <svg viewBox="0 0 62 38" className="w-[61px] h-[37px] shrink-0">
        <g fill="#b9b9b9">
          <path d="M30 37L2 37Q-2 24 8 22Q16 22 30 37Z" />
          <path d="M29 33L10 18Q5 8 14 7Q22 8 29 33Z" />
          <path d="M30 30L20 8Q20 0 27 1Q33 6 30 30Z" />
          <path d="M32 30L30 6Q34 -1 40 1Q46 6 32 30Z" />
          <path d="M33 33L44 9Q52 5 54 13Q54 20 33 33Z" />
          <path d="M32 37L50 23Q60 20 62 28Q62 36 32 37Z" />
        </g>
      </svg>
      <span className="font-['DejaVu_Sans',sans-serif] font-bold text-[38px] leading-none origin-left scale-x-[1.58] w-[182px] [-webkit-text-stroke:1px_#b9b9b9]">
        CNBC
      </span>
    </div>
  );
}

function DashboardSheet() {
  return (
    <div className="w-[998px] h-[1341px] bg-white pl-[14px] pr-[17px] font-['Liberation_Sans',sans-serif] shrink-0">
      <div className="h-[100px] flex items-center justify-between">
        <div className="text-[58px] text-[#555] pl-[6px] leading-none origin-left scale-x-[0.94] whitespace-nowrap">Trafficking hot spots</div>
        <Cnbc />
      </div>
      <div className="h-[80px] flex items-center">
        <div className="w-[119px] pl-[16px] shrink-0">
          <div className="w-[68px] h-[66px] rounded-full bg-black text-white text-[16px] flex items-center justify-center">About</div>
        </div>
        <div className="flex-1 text-center text-black">
          <div className="text-[32px] leading-[36px] pl-[1px]">Select a tier or a region to filter the map</div>
          <div className="text-[22px] leading-[26px] italic">(hover over "About" at left for full explanation of tiers)</div>
        </div>
      </div>
      <div className="h-[92px] flex items-center justify-center text-[26px] text-black">
        <span>
          SOURCE: U.S. Department of State, 2015 <i>Trafficking in Persons Report</i>
        </span>
      </div>
      <TierTable />
      <div className="relative mt-[20px] w-[967px] h-[587px] border-2 border-[#dcdcdc]">
        <WorldMap />
        <div className="absolute left-[209px] top-[485px] grid grid-cols-[238px_auto] auto-rows-[40px] text-[22.5px] text-[#555]">
          {[
            ["bg-[#57a765]", "Tier 1"],
            ["bg-[#5f9ec7]", "Tier 2 Watch List"],
            ["bg-[#fec76f]", "Tier 2"],
            ["bg-[#dc4c50]", "Tier 3"],
          ].map(([bg, label]) => (
            <div key={label} className="flex items-center gap-[10px]">
              <div className={`w-[26px] h-[26px] border-2 border-[#666] ${bg}`} />
              <span>{label}</span>
            </div>
          ))}
        </div>
        <div className="absolute left-[440px] top-[487px] h-[103px] border-l-2 border-dashed border-[#777]" />
        <div className="absolute left-[10px] top-[562px] text-[16px] leading-none text-[#666]">© OpenStreetMap contributors</div>
      </div>
    </div>
  );
}

function TabBar() {
  const Add = ({ kind }: { kind: string }) => (
    <div className="w-[64px] h-full border-r-2 border-[#cfcfcf] flex items-center justify-center">
      <svg viewBox="0 0 34 34" className="w-[34px] h-[34px]">
        {kind === "sheet" && <path d="M22 20V3H3V25H16M8 20V14M13 20V9M18 20V14" fill="none" stroke="#666" strokeWidth="2" />}
        {kind === "dash" && <path d="M24 18V3H3V25H16M3 14H24M13 3V25" fill="none" stroke="#666" strokeWidth="2" />}
        {kind === "story" && <path d="M3 3L13 8L23 3V20M3 3V25H15M13 8V25" fill="none" stroke="#666" strokeWidth="2" />}
        <path d="M23 17V33M15 25H31" stroke="#555" strokeWidth="4" />
      </svg>
    </div>
  );
  return (
    <div className="h-[62px] shrink-0 bg-[#e5e5e5] border-t-2 border-b-[3px] border-[#d4d4d4] flex text-[23.5px] text-[#555]">
      <div className="w-[256px] border-r-2 border-[#cfcfcf] flex items-center pl-[14px] gap-[13px]">
        <svg viewBox="0 0 16 26" className="w-[16px] h-[24px]">
          <path d="M1 5V21Q1 25 8 25Q15 25 15 21V5" fill="none" stroke="#777" strokeWidth="2" />
          <ellipse cx="8" cy="5" rx="7" ry="4" fill="none" stroke="#777" strokeWidth="2" />
        </svg>
        Data Source
      </div>
      <div className="w-[84px] border-r-2 border-[#cfcfcf] flex items-center pl-[12px]">Map</div>
      <div className="w-[131px] border-r-2 border-[#cfcfcf] flex items-center pl-[11px]">Counter</div>
      <div className="w-[234px] bg-[#fafafa] border-r-2 border-[#cfcfcf] flex items-center pl-[16px] gap-[10px] font-bold text-[#555] text-[23px]">
        <svg viewBox="0 0 22 24" className="w-[22px] h-[24px] shrink-0">
          <path d="M1 1H21V23H1ZM1 12H21M11 1V23" fill="none" stroke="#666" strokeWidth="2" />
        </svg>
        Dashboard 1
      </div>
      <div className="w-[126px] border-r-2 border-[#cfcfcf] flex items-center pl-[12px]">Sheet 3</div>
      <Add kind="sheet" />
      <Add kind="dash" />
      <Add kind="story" />
    </div>
  );
}

function StatusBar() {
  const Div = ({ w }: { w: string }) => <div className={`h-full border-r-2 border-[#d0d0d0] shrink-0 ${w}`} />;
  const G = "#bdbdbd";
  const Small = () => (
    <div className="grid grid-cols-3 gap-[2px] w-[22px]">
      {[...Array(9)].map((_, i) => (
        <div key={i} className="h-[6px] rounded-[1px] bg-[#bdbdbd]" />
      ))}
    </div>
  );
  return (
    <div className="h-[35px] shrink-0 bg-[#ebebeb] flex">
      <Div w="w-[2125px]" />
      <Div w="w-[254px]" />
      <Div w="w-[54px]" />
      <Div w="w-[54px]" />
      <Div w="w-[94px]" />
      <div className="w-[142px] border-r-2 border-[#d0d0d0] flex items-center shrink-0 pl-[16px] gap-[21px]">
        <svg viewBox="0 0 12 22" className="w-[12px] h-[22px]"><path d="M0 0H2V22H0ZM12 0V22L4 11Z" fill={G} /></svg>
        <svg viewBox="0 0 9 22" className="w-[9px] h-[22px]"><path d="M9 0V22L0 11Z" fill={G} /></svg>
        <svg viewBox="0 0 9 22" className="w-[9px] h-[22px] ml-[3px]"><path d="M0 0V22L9 11Z" fill={G} /></svg>
        <svg viewBox="0 0 12 22" className="w-[12px] h-[22px]"><path d="M10 0H12V22H10ZM0 0V22L8 11Z" fill={G} /></svg>
      </div>
      <div className="flex items-center pl-[18px] gap-[20px]">
        <Small />
        <div className="w-[22px] flex flex-col gap-[2px]">
          <div className="h-[14px] rounded-[1px] bg-[#bdbdbd]" />
          <div className="grid grid-cols-3 gap-[2px]">
            <div className="h-[6px] rounded-[1px] bg-[#bdbdbd]" />
            <div className="h-[6px] rounded-[1px] bg-[#bdbdbd]" />
            <div className="h-[6px] rounded-[1px] bg-[#bdbdbd]" />
          </div>
        </div>
        <div className="w-[22px] h-[22px] rounded-[1px] bg-[#666]" />
      </div>
    </div>
  );
}

export default function App() {
  return (
    <div className="w-[2874px] h-[1735px] overflow-hidden flex flex-col font-['Open_Sans',sans-serif]">
      <div className="h-[38px] shrink-0 bg-gradient-to-b from-[#e9e7e9] to-[#d3d3d3] border-b-2 border-[#b2b2b2] flex items-center">
        <div className="w-[120px] pl-[11px] flex gap-[15px] shrink-0">
          <div className="w-[24px] h-[24px] rounded-full bg-[#d6d6d6] border border-[#bcbcbc]" />
          <div className="w-[24px] h-[24px] rounded-full bg-[#d6d6d6] border border-[#bcbcbc]" />
          <div className="w-[24px] h-[24px] rounded-full bg-[#d6d6d6] border border-[#bcbcbc]" />
        </div>
        <div className="flex-1 flex items-center justify-center gap-[11px] text-[27.6px] text-[#444] font-['Liberation_Sans',sans-serif]">
          <div className="w-[29px] h-[33px] bg-[#f4f4f4] border border-[#aaa] border-r-2 border-r-[#d08a3c] flex items-center justify-center">
            <TableauLogo className="w-[24px] h-[26px]" />
          </div>
          <span>Tableau Public - Human Trafficking Map Final</span>
        </div>
        <div className="w-[130px] shrink-0" />
      </div>
      <Toolbar />
      <div className="flex flex-1 min-h-0 bg-[#f5f5f5]">
        <Sidebar />
        <div className="flex-1">
          <DashboardSheet />
        </div>
      </div>
      <TabBar />
      <StatusBar />
    </div>
  );
}
